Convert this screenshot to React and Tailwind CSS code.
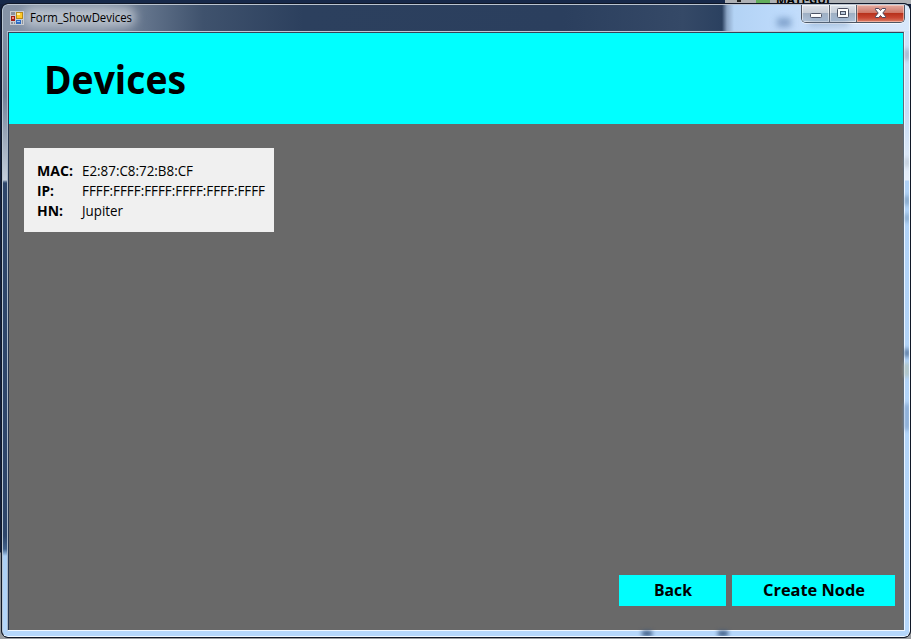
import React from "react";

const FONT = "font-['Open_Sans','Noto_Sans',sans-serif]";

function FormIcon() {
  return (
    <svg width="14" height="14" viewBox="0 0 14 14" shapeRendering="crispEdges" className="shrink-0">
      <rect width="14" height="14" fill="#c9cdd2" />
      <rect x="1" y="1" width="4" height="3" fill="#8b929c" />
      <rect x="1" y="11" width="2" height="2" fill="#8b929c" />
      <rect x="4" y="11" width="1" height="2" fill="#8b929c" />
      <rect x="12" y="9" width="1" height="4" fill="#8b929c" />
      <rect x="6" y="1" width="7" height="7" fill="#b88a16" />
      <rect x="7" y="2" width="5" height="5" fill="#ffc928" />
      <rect x="7" y="2" width="3" height="2" fill="#fff0a0" />
      <rect x="1" y="5" width="4" height="5" fill="#a31c14" />
      <rect x="2" y="6" width="2" height="2" fill="#f08a78" />
      <rect x="6" y="9" width="5" height="4" fill="#2f6cc4" />
      <rect x="7" y="10" width="3" height="1" fill="#9cc8f5" />
    </svg>
  );
}

function CaptionButtons() {
  return (
    <div className="mr-[4px] flex h-[18px] w-[104px] shrink-0 overflow-hidden rounded-b-[5px] border border-t-0 border-[#4d5663] shadow-[0_1px_0_rgba(255,255,255,0.7)]">
      <div className="flex w-[28px] justify-center border-r border-[#59616d] bg-[linear-gradient(#dde3ea_0%,#c6ced9_45%,#9fb0c4_50%,#b2c6dc_100%)] shadow-[inset_0_0_0_1px_rgba(255,255,255,0.55)]">
        <svg width="28" height="17" viewBox="0 1 28 17" className="shrink-0">
          <rect x="8.5" y="9.5" width="11" height="4" rx="1" fill="#fff" stroke="#4b5263" />
        </svg>
      </div>
      <div className="flex w-[27px] justify-center border-r border-[#59616d] bg-[linear-gradient(#dde3ea_0%,#c6ced9_45%,#9fb0c4_50%,#b2c6dc_100%)] shadow-[inset_0_0_0_1px_rgba(255,255,255,0.55)]">
        <svg width="26" height="17" viewBox="0 1 26 17" className="shrink-0">
          <rect x="7.5" y="4.5" width="11" height="9" rx="1" fill="#fff" stroke="#4b5263" />
          <rect x="10.5" y="7.5" width="5" height="3" fill="#b9c8da" stroke="#4b5263" />
        </svg>
      </div>
      <div className="flex flex-1 justify-center bg-[linear-gradient(#e4aca2_0%,#d07868_45%,#b8321c_50%,#c94632_75%,#dc8068_100%)] shadow-[inset_0_0_0_1px_rgba(255,220,210,0.55)]">
        <svg width="47" height="17" viewBox="0 1 47 17" className="shrink-0">
          <path d="M18.5 4.5h3.3l1.7 2 1.7-2h3.3v1.2L25.8 9l2.7 3.3v1.2h-3.3l-1.7-2-1.7 2h-3.3v-1.2L21.2 9l-2.7-3.3z" fill="#fff" stroke="#50465a" />
        </svg>
      </div>
    </div>
  );
}

function TitleBar() {
  return (
    <div className="relative flex h-[26px] w-full shrink-0 items-start overflow-hidden bg-[linear-gradient(90deg,#8593a6_0px,#8491a3_100px,#61728a_145px,#3f526d_200px,#2c405e_300px,#2b3f5e_560px,#354967_680px,#2b4160_719px,#8ba5c5_724px,#b3d3f5_731px,#bddafb_780px,#d1e4fa_850px,#d8e8fb_100%)]">
      <div className="absolute left-[20px] top-[2px] h-[20px] w-[113px] rounded-full bg-[#c7ced7]/75 blur-[5px]" />
      <div className="absolute left-[774px] top-[13px] h-[9px] w-[14px] bg-[#587eae]/60 blur-[3px]" />
      <div className="absolute left-[806px] top-[15px] h-[6px] w-[40px] bg-[#6385ac]/40 blur-[3px]" />
      <div className="relative flex flex-1 items-center gap-[6px] pl-[7px] pt-[5px]">
        <FormIcon />
        <svg width="110" height="16" className="overflow-visible">
          <text x="0" y="12" textLength="102" lengthAdjust="spacingAndGlyphs" className="fill-black text-[12px]">Form_ShowDevices</text>
        </svg>
      </div>
      <CaptionButtons />
    </div>
  );
}

function Label({ text, width, className }) {
  return (
    <svg width={width} height="20" className="block shrink-0 overflow-visible">
      <text x="0" y="15" textLength={width} lengthAdjust="spacingAndGlyphs" className={className}>{text}</text>
    </svg>
  );
}

const fields = [
  { name: "MAC:", nameWidth: 36, value: "E2:87:C8:72:B8:CF", valueWidth: 111 },
  { name: "IP:", nameWidth: 17, value: "FFFF:FFFF:FFFF:FFFF:FFFF:FFFF", valueWidth: 183 },
  { name: "HN:", nameWidth: 26, value: "Jupiter", valueWidth: 41 },
];

function DeviceCard() {
  return (
    <div className="ml-[15px] mt-[24px] h-[84px] w-[250px] bg-[#f0f0f0] pl-[13px] pt-[13px]">
      {fields.map((f) => (
        <div key={f.name} className="flex h-[20px]">
          <div className="w-[45px]">
            <Label text={f.name} width={f.nameWidth} className="fill-black text-[13.5px] font-bold" />
          </div>
          <Label text={f.value} width={f.valueWidth} className="fill-black text-[14px]" />
        </div>
      ))}
    </div>
  );
}

function Client() {
  return (
    <div className="flex h-[600px] w-[898px] shrink-0 flex-col border border-b-[#f0f7ff] border-l-[#a9b7c7] border-r-[#eaf4ff] border-t-[#bdc7d4] bg-[#696969]">
      <div className="flex h-full w-full flex-col border border-b-0 border-l-[#26354f] border-r-[#5f6b78] border-t-[#35455c]">
        <header className="h-[91px] shrink-0 bg-[#00ffff] pl-[37px] pt-[20px]">
          <svg width="140" height="50" className="block overflow-visible">
            <text x="-2" y="41" textLength="142" lengthAdjust="spacingAndGlyphs" className="fill-black text-[39px] font-bold">Devices</text>
          </svg>
        </header>
        <main className="flex flex-1 flex-col">
          <DeviceCard />
          <div className="mb-[24px] mr-[8px] mt-auto flex justify-end gap-[6px]">
            <button className="flex h-[31px] w-[107px] justify-center bg-[#00ffff] pt-[6px]">
              <Label text="Back" width={38} className="fill-black text-[16px] font-bold" />
            </button>
            <button className="flex h-[31px] w-[163px] justify-center bg-[#00ffff] pt-[6px]">
              <Label text="Create Node" width={102} className="fill-black text-[16px] font-bold" />
            </button>
          </div>
        </main>
      </div>
    </div>
  );
}

export default function App() {
  return (
    <div className={`relative h-[639px] w-[911px] overflow-hidden bg-[linear-gradient(#142240_0px,#101e3a_552px,#8b8f94_553px,#9a9da0_100%)] ${FONT}`}>
      <div className="flex h-[4px] w-full overflow-hidden bg-[#17294a]">
        <div className="ml-[725px] flex flex-1 overflow-hidden bg-[#aeb1b5]">
          <div className="ml-[12px] h-[2px] w-[4px] bg-[#222]" />
          <div className="ml-[15px] h-[3px] w-[14px] bg-[#62ad5b]" />
          <span className="-mt-[7px] ml-[6px] text-[11.5px] font-bold leading-[14px] text-black">MATI-GUI</span>
        </div>
      </div>
      <div className="absolute left-[1px] top-[3px] h-[635px] w-[910px] overflow-hidden rounded-[7px] border border-[#101828] bg-[#101828]">
        <div className="flex h-full w-full flex-col overflow-hidden rounded-[6px] border border-b-[#f2f9ff] border-l-[#b8c5d3] border-r-[#f2f9ff] border-t-[#bac4d0] bg-[#b5d7fb]">
          <TitleBar />
          <div className="flex h-[600px] shrink-0">
            <div className="h-full w-[4px] shrink-0 bg-[linear-gradient(#8290a3_0px,#74839a_65px,#c4cedb_149px,#7e92ab_150px,#2d456a_152px,#2d456a_505px,#41618a_518px,#abcff5_525px,#b5d7fb_100%)]" />
            <Client />
            <div className="relative h-full flex-1 bg-[linear-gradient(#cfe3fa_0px,#c7dcf5_80px,#e6eef8_149px,#b0d2f7_150px,#b5d7fb_100%)]">
              <div className="absolute top-[18px] h-[11px] w-full bg-[#74879d]/60 blur-[2px]" />
              <div className="absolute top-[127px] h-[9px] w-full bg-[#9aa5b2]/50 blur-[2px]" />
              <div className="absolute top-[165px] h-[9px] w-full bg-[#60809f]/70 blur-[2px]" />
              <div className="absolute top-[183px] h-[8px] w-full bg-[#60809f]/60 blur-[2px]" />
              <div className="absolute top-[318px] h-[8px] w-full bg-[#3d5c82] blur-[2px]" />
              <div className="absolute top-[332px] h-[14px] w-full bg-[#b1beae] blur-[2px]" />
              <div className="absolute top-[373px] h-[26px] w-full bg-[#7c9cc5] blur-[2px]" />
            </div>
          </div>
          <div className="relative flex-1 bg-[#b5d7fb]">
            <div className="absolute left-[639px] h-full w-[10px] bg-[#34517a] blur-[2px]" />
            <div className="absolute left-[715px] h-full w-[10px] bg-[#34517a] blur-[2px]" />
          </div>
        </div>
      </div>
    </div>
  );
}
